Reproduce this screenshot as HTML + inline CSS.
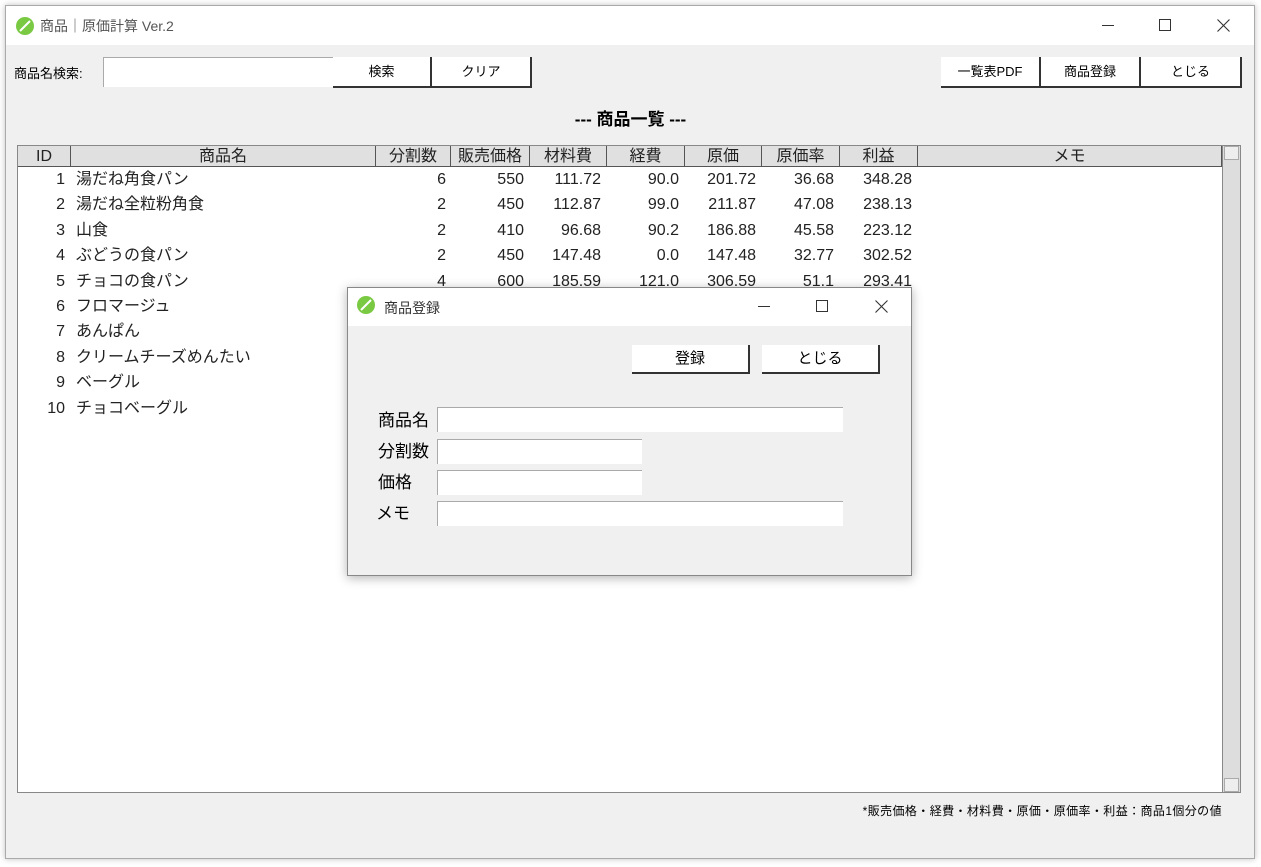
<!DOCTYPE html>
<html><head><meta charset="utf-8"><style>
*{margin:0;padding:0;box-sizing:border-box}
body{width:1261px;height:867px;background:#fff;position:relative;overflow:hidden;font-family:"Liberation Sans","Noto Sans CJK JP",sans-serif;color:#000}
.a{position:absolute}
.win{left:5px;top:5px;width:1250px;height:854px;background:#f0f0f0;border:1px solid #aaa;box-shadow:0 0 6px rgba(0,0,0,.25)}
.tb{left:0;top:0;width:100%;height:39px;background:#fff}
.btn{position:absolute;background:#fff;border-right:2px solid #333;border-bottom:2px solid #333;font-size:13px;text-align:center}
.inp{position:absolute;background:#fff;border-top:1px solid #aaa;border-left:1px solid #aaa}
.hd{position:absolute;top:0;height:21px;border-right:1px solid #555;font-size:16px;text-align:center;line-height:21px;color:#222}
.r{position:absolute;font-size:16px;height:25px;line-height:25px;color:#222}
.n{text-align:right}
</style></head><body>
<div class="a win">
 <div class="a tb">
  <svg class="a" style="left:9px;top:10px" width="20" height="20"><circle cx="10" cy="10" r="9" fill="#7ac943"/><path d="M5 15 L15 5" stroke="#fff" stroke-width="2"/></svg>
  <div class="a" style="left:34px;top:10px;font-size:14px;color:#555">商品｜原価計算 Ver.2</div>
  <div class="a" style="left:1096px;top:19px;width:12px;height:1px;background:#333"></div>
  <div class="a" style="left:1153px;top:13px;width:12px;height:12px;border:1px solid #333"></div>
  <svg class="a" style="left:1211px;top:13px" width="13" height="13"><path d="M0.5 0.5L12.5 12.5M12.5 0.5L0.5 12.5" stroke="#333" stroke-width="1.1"/></svg>
 </div>
</div>
<div class="a" style="left:14px;top:63px;font-size:13px">商品名検索:</div>
<div class="inp" style="left:103px;top:57px;width:230px;height:30px"></div>
<div class="btn" style="left:333px;top:57px;width:99px;height:31px;line-height:29px">検索</div>
<div class="btn" style="left:432px;top:57px;width:100px;height:31px;line-height:29px">クリア</div>
<div class="btn" style="left:941px;top:57px;width:100px;height:31px;line-height:29px">一覧表PDF</div>
<div class="btn" style="left:1041px;top:57px;width:100px;height:31px;line-height:29px">商品登録</div>
<div class="btn" style="left:1141px;top:57px;width:101px;height:31px;line-height:29px">とじる</div>
<div class="a" style="left:0;width:1261px;top:105px;text-align:center;font-size:17px;font-weight:bold">--- 商品一覧 ---</div>
<div class="a" style="left:17px;top:145px;width:1224px;height:648px;background:#fff;border:1px solid #888">
 <div class="a" style="left:0;top:0;width:1204px;height:21px;background:#e0e0e0;border-bottom:1px solid #555">
  <div class="hd" style="left:0;width:53px">ID</div>
  <div class="hd" style="left:53px;width:305px">商品名</div>
  <div class="hd" style="left:358px;width:75px">分割数</div>
  <div class="hd" style="left:433px;width:79px">販売価格</div>
  <div class="hd" style="left:512px;width:77px">材料費</div>
  <div class="hd" style="left:589px;width:78px">経費</div>
  <div class="hd" style="left:667px;width:77px">原価</div>
  <div class="hd" style="left:744px;width:78px">原価率</div>
  <div class="hd" style="left:822px;width:78px">利益</div>
  <div class="hd" style="left:900px;width:304px">メモ</div>
 </div>
 <div class="a" style="left:1204px;top:0;width:18px;height:646px;background:#ddd;border-left:1px solid #888"><div class="a" style="left:1px;top:0;width:15px;height:14px;background:#eee;border:1px solid #aaa"></div><div class="a" style="left:1px;bottom:0;width:15px;height:14px;background:#eee;border:1px solid #aaa"></div></div>
 <div id="rows"></div>
</div>
<div class="a" style="right:39px;top:802px;font-size:12px;letter-spacing:0.4px">*販売価格・経費・材料費・原価・原価率・利益：商品1個分の値</div>

<div class="a" style="left:347px;top:287px;width:565px;height:289px;background:#f0f0f0;border:1px solid #888;box-shadow:0 2px 10px rgba(0,0,0,.3)">
 <div class="a tb" style="height:38px">
  <svg class="a" style="left:8px;top:7px" width="20" height="20"><circle cx="10" cy="10" r="9" fill="#7ac943"/><path d="M5 15 L15 5" stroke="#fff" stroke-width="2"/></svg>
  <div class="a" style="left:36px;top:10px;font-size:14px;color:#333">商品登録</div>
  <div class="a" style="left:410px;top:18px;width:12px;height:1px;background:#333"></div>
  <div class="a" style="left:468px;top:12px;width:12px;height:12px;border:1px solid #333"></div>
  <svg class="a" style="left:527px;top:12px" width="13" height="13"><path d="M0.5 0.5L12.5 12.5M12.5 0.5L0.5 12.5" stroke="#333" stroke-width="1.1"/></svg>
 </div>
 <div class="btn" style="left:284px;top:57px;width:118px;height:29px;line-height:27px;font-size:15px">登録</div>
 <div class="btn" style="left:414px;top:57px;width:118px;height:29px;line-height:27px;font-size:15px">とじる</div>
 <div class="a" style="left:30px;top:118px;font-size:17px">商品名</div>
 <div class="a" style="left:30px;top:149px;font-size:17px">分割数</div>
 <div class="a" style="left:30px;top:180px;font-size:17px">価格</div>
 <div class="a" style="left:28px;top:211px;font-size:17px">メモ</div>
 <div class="inp" style="left:89px;top:119px;width:406px;height:25px"></div>
 <div class="inp" style="left:89px;top:151px;width:205px;height:25px"></div>
 <div class="inp" style="left:89px;top:182px;width:205px;height:25px"></div>
 <div class="inp" style="left:89px;top:213px;width:406px;height:25px"></div>
</div>
<script>
var d=[[1,"湯だね角食パン",6,550,"111.72","90.0","201.72","36.68","348.28"],[2,"湯だね全粒粉角食",2,450,"112.87","99.0","211.87","47.08","238.13"],[3,"山食",2,410,"96.68","90.2","186.88","45.58","223.12"],[4,"ぶどうの食パン",2,450,"147.48","0.0","147.48","32.77","302.52"],[5,"チョコの食パン",4,600,"185.59","121.0","306.59","51.1","293.41"],[6,"フロマージュ"],[7,"あんぱん"],[8,"クリームチーズめんたい"],[9,"ベーグル"],[10,"チョコベーグル"]];
var h="";var R=[[0,47],[358,428],[433,506],[512,583],[589,661],[667,738],[744,816],[822,894]];
d.forEach(function(r,i){var t=21+i*25.4;h+='<div class="r n" style="left:0;width:47px;top:'+t+'px">'+r[0]+'</div><div class="r" style="left:58px;top:'+t+'px">'+r[1]+'</div>';
for(var k=2;k<r.length;k++){var c=R[k-1];h+='<div class="r n" style="left:'+c[0]+'px;width:'+(c[1]-c[0])+'px;top:'+t+'px">'+r[k]+'</div>';}});
document.getElementById("rows").innerHTML=h;
</script>
</body></html>
